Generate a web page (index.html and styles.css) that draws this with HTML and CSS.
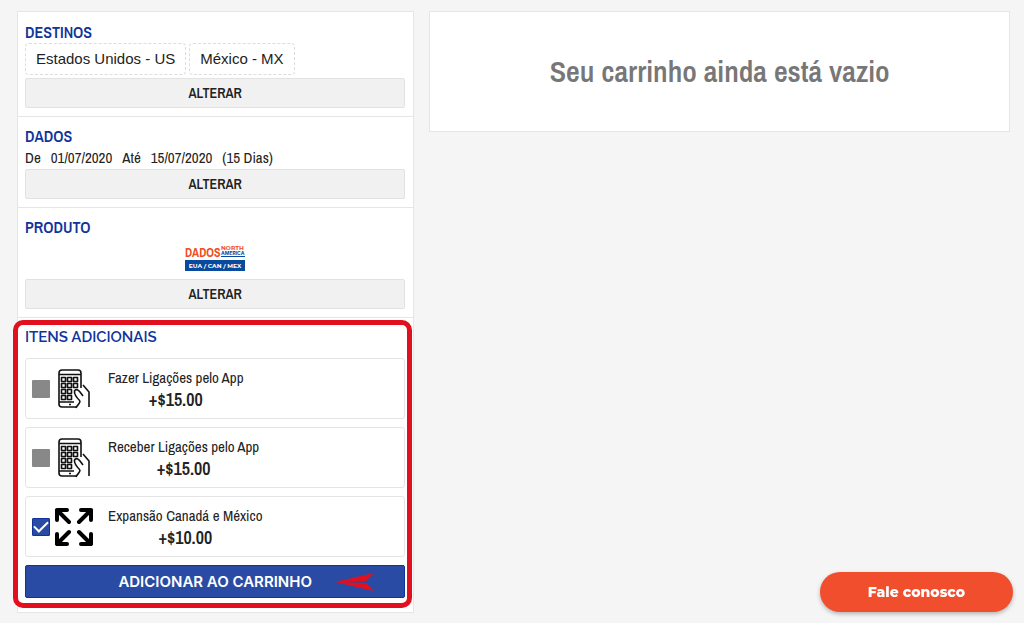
FILE: index.html
```html
<!DOCTYPE html>
<html lang="pt-BR">
<head>
<meta charset="utf-8">
<meta name="viewport" content="width=device-width, initial-scale=1">
<title>Carrinho</title>
<link rel="stylesheet" href="styles.css">
</head>
<body>
<svg class="defs" aria-hidden="true">
  <symbol id="phone" viewBox="0 0 40 40">
    <g fill="none" stroke="#111" stroke-width="1.6" stroke-linejoin="round">
      <path d="M27 19V4a3 3 0 0 0-3-3H8a3 3 0 0 0-3 3v31a3 3 0 0 0 3 3h14"/>
      <path d="M5 5.500h22M5 33h15M15 35.500h2"/>
      <path d="M7.500 8.500h4v4h-4zM13.500 8.500h4v4h-4zM19.500 8.500h4v4h-4zM7.500 14.500h4v4h-4zM13.500 14.500h4v4h-4zM19.500 14.500h4v4h-4zM7.500 20.500h4v4h-4zM13.500 20.500h4v4h-4zM7.500 26.500h4v4h-4zM13.500 26.500h4v4h-4z"/>
      <path d="M22 39c1-3 4-4 4-7M26 32c-3-3-6-7-5.500-10 1.500-2.500 4-1 5.500 1l3 4M29 16l6 7v15"/>
    </g>
  </symbol>
  <symbol id="expand" viewBox="0 0 40 40">
    <g fill="none" stroke="#000" stroke-width="4" stroke-linecap="round" stroke-linejoin="round">
      <path d="M3 13V3h10M3 3l12 12M27 3h10v10M37 3L25 15M3 27v10h10M3 37l12-12M27 37h10V27M37 37L25 25"/>
    </g>
  </symbol>
</svg>
<main class="page">
  <div class="panel">
    <section class="step">
      <h2 class="title">DESTINOS</h2>
      <div class="tags"><span class="tag">Estados Unidos - US</span><span class="tag">México - MX</span></div>
      <button class="change" type="button">ALTERAR</button>
    </section>
    <section class="step">
      <h2 class="title">DADOS</h2>
      <div class="dates"><span>De</span><span>01/07/2020</span><span>Até</span><span>15/07/2020</span><span>(15 Dias)</span></div>
      <button class="change" type="button">ALTERAR</button>
    </section>
    <section class="step">
      <h2 class="title">PRODUTO</h2>
      <svg class="logo" viewBox="0 0 60 27" role="img" aria-label="Dados North America">
        <text class="logo-main" x="0" y="13">DADOS</text>
        <text class="logo-north" x="36" y="6">NORTH</text>
        <text class="logo-america" x="36" y="11">AMERICA</text>
        <path d="M36 12h24v1H36zM0 16h60v11H0z" fill="#084a9e"/>
        <text class="logo-places" x="30" y="24">EUA / CAN / MEX</text>
      </svg>
      <button class="change" type="button">ALTERAR</button>
    </section>
    <section class="step extras">
      <h2 class="title title-extras">ITENS ADICIONAIS</h2>
      <label class="item">
        <input class="check" type="checkbox">
        <svg class="icon" aria-hidden="true"><use href="#phone"/></svg>
        <span class="info"><span>Fazer Ligações pelo App</span><strong class="price">+$15.00</strong></span>
      </label>
      <label class="item">
        <input class="check" type="checkbox">
        <svg class="icon" aria-hidden="true"><use href="#phone"/></svg>
        <span class="info"><span>Receber Ligações pelo App</span><strong class="price">+$15.00</strong></span>
      </label>
      <label class="item">
        <input class="check" type="checkbox" checked>
        <svg class="icon" aria-hidden="true"><use href="#expand"/></svg>
        <span class="info"><span>Expansão Canadá e México</span><strong class="price">+$10.00</strong></span>
      </label>
      <button class="add" type="button">ADICIONAR AO CARRINHO
        <svg class="arrow" viewBox="0 0 40 20" aria-hidden="true"><path d="M0 10L39 1 31 9 6 10 31 11 39 19z" fill="#e2101f"/></svg>
      </button>
    </section>
  </div>
  <aside class="cart"><p class="empty">Seu carrinho ainda está vazio</p></aside>
</main>
<button class="contact" type="button">Fale conosco</button>
</body>
</html>
```

FILE: styles.css
```css
* { box-sizing: border-box; }
body {
  margin: 0;
  background: #f5f5f5;
  color: #222;
  font: 15px/22px "Archivo Narrow", "Liberation Sans Narrow", "Liberation Sans", sans-serif;
}
h2, p { margin: 0; }
button { font-family: inherit; cursor: pointer; }
.defs { position: absolute; width: 0; height: 0; }
.page {
  display: grid;
  grid-template-columns: 13fr 19fr;
  gap: 15px;
  align-items: start;
  padding: 11px 14px 11px 17px;
}
.panel, .cart { background: #fff; border: 1px solid #e6e6e6; }
.step { padding: 9px 8px 8px 7px; }
.step + .step { border-top: 1px solid #e6e6e6; padding-top: 8px; }
.title { color: #10349b; font-size: 16px; line-height: 22px; font-weight: 600; }
.tags { display: flex; gap: 3px; margin-bottom: 3px; }
.tag {
  padding: 0 10px;
  border: 1px dashed #ddd;
  border-radius: 4px;
  font: 15px/30px "Liberation Sans", sans-serif;
}
.dates { display: flex; gap: 10px; }
.change {
  display: block;
  width: 100%;
  height: 30px;
  padding: 0;
  border: 1px solid #e2e2e2;
  border-radius: 2px;
  background: #f1f1f1;
  color: #222;
  font-size: 14px;
  font-weight: 600;
}
.logo { display: block; width: 60px; height: 27px; margin: 6px auto 8px; }
.logo-main { font: 700 12px "Archivo Narrow", sans-serif; fill: #f04e23; }
.logo-north { font: 700 6px Montserrat, Inter, sans-serif; fill: #f04e23; }
.logo-america { font: 700 5px Inter, sans-serif; fill: #084a9e; }
.logo-places { font: 700 6px Montserrat, Inter, sans-serif; fill: #fff; text-anchor: middle; }
.extras { position: relative; display: grid; gap: 8px; }
.extras.step { padding-bottom: 14px; }
.extras::after {
  content: "";
  position: absolute;
  inset: 2px 1px 4px -5px;
  border: 5px solid #e2101f;
  border-radius: 10px;
  pointer-events: none;
}
.title-extras { margin-bottom: 2px; font: 600 15px/22px Raleway, Lato, sans-serif; }
.item {
  display: flex;
  align-items: center;
  height: 61px;
  padding: 0 6px;
  border: 1px solid #e4e4e4;
  border-radius: 3px;
}
.check {
  appearance: none;
  display: grid;
  place-items: center;
  width: 18px;
  height: 18px;
  margin: 0 4px 0 0;
  border-radius: 1px;
  background: #888;
}
.check:checked { background: #2a4ba3; border: 1px solid #10349b; }
.check:checked::after {
  content: "";
  width: 12px;
  height: 6px;
  border: solid #fff;
  border-width: 0 0 2px 2px;
  transform: translateY(-2px) rotate(-45deg);
}
.icon { width: 40px; height: 40px; margin-right: 14px; }
.info { display: grid; justify-items: center; }
.price { font-size: 18px; font-weight: 600; }
.add {
  display: flex;
  align-items: center;
  justify-content: center;
  position: relative;
  height: 33px;
  border: 1px solid #10349b;
  border-radius: 2px;
  background: #2a4ba3;
  color: #fff;
  font: 600 15px/20px Inter, sans-serif;
}
.arrow { position: absolute; right: 29px; width: 40px; height: 20px; }
.cart { padding: 40px 16px; }
.empty { color: #777; font-size: 30px; line-height: 39px; font-weight: 600; text-align: center; }
.contact {
  position: fixed;
  right: 11px;
  bottom: 11px;
  padding: 10px 48px;
  border: 0;
  border-radius: 20px;
  background: #f04e2d;
  color: #fff;
  font: 800 14px/20px Montserrat, Inter, sans-serif;
  box-shadow: 0 2px 4px #0004;
}
```
